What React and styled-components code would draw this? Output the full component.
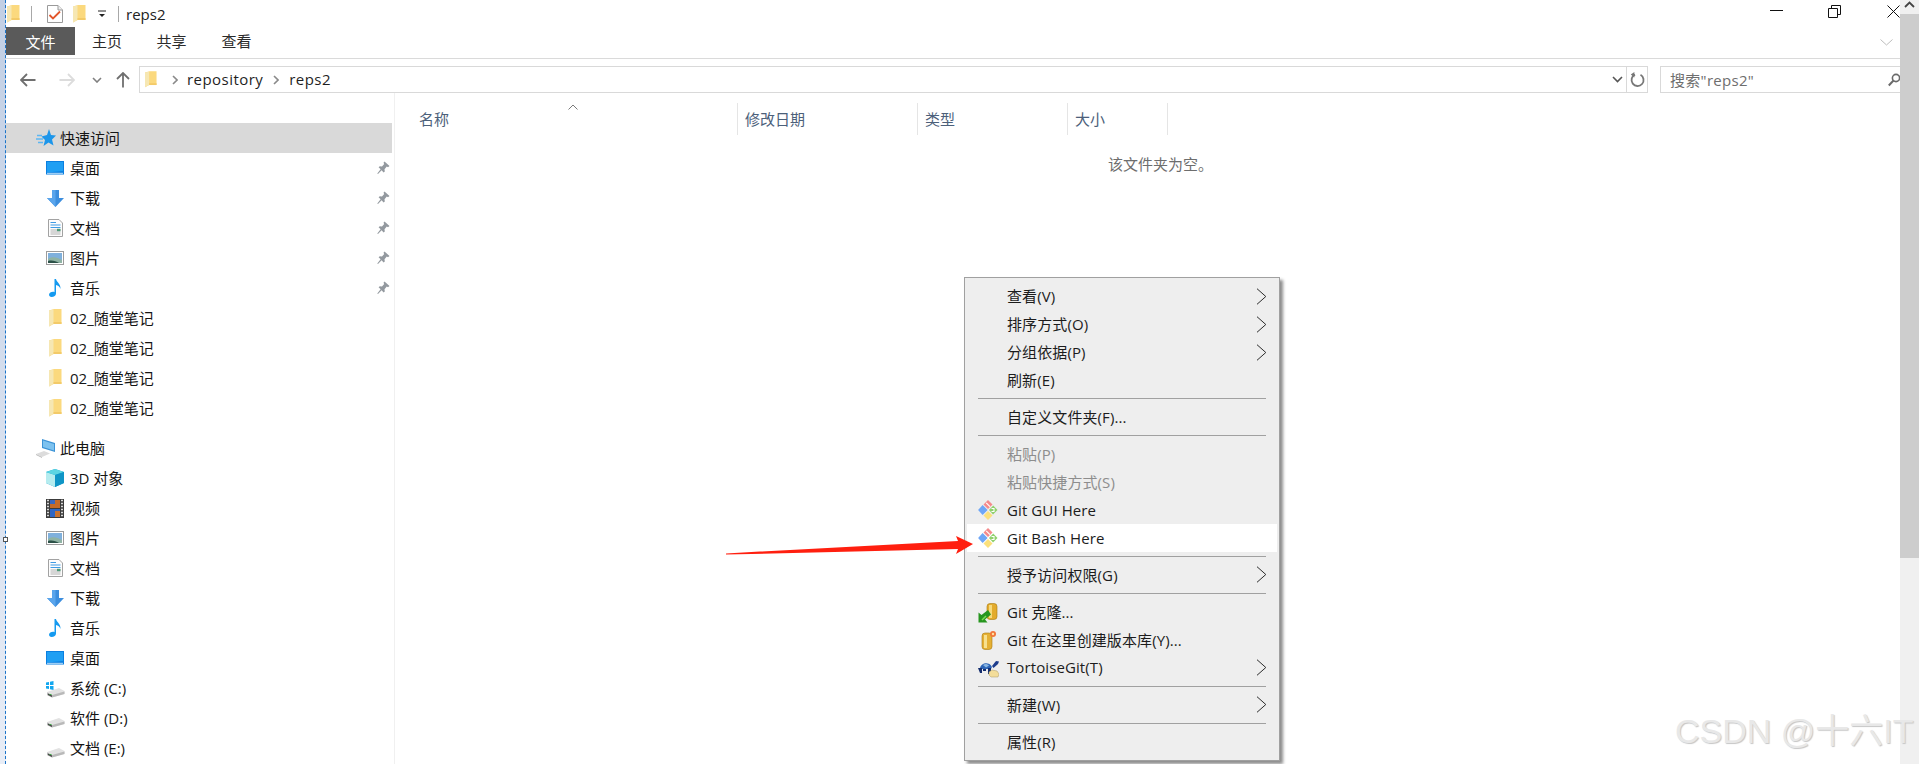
import React from 'react';
import styled, { createGlobalStyle } from 'styled-components';

const Global = createGlobalStyle`
  html, body { margin: 0; padding: 0; background: #fff; }
  body { font-family: "Open Sans", "Noto Sans CJK SC", sans-serif; font-size: 15px; color: #1a1a1a; }
  * { box-sizing: border-box; }
`;

const Page = styled.div`
  position: relative; display: flex; width: 1920px; height: 764px; overflow: hidden; background: #fff;
`;
const Strip = styled.div`
  position: relative; flex: 0 0 6px;
  background: linear-gradient(#c2cfe4, #e8edf6);
  border-right: 1px dashed #1b74c9;
`;
const Handle = styled.div`
  position: absolute; left: 3px; top: 537px; width: 5px; height: 5px; background: #fff; border: 1px solid #555;
`;
const Window = styled.div`
  flex: 1; min-width: 0; display: flex; flex-direction: column;
`;
const TitleBar = styled.div`
  display: flex; align-items: center; height: 27px; padding-left: 1px;
`;
const QuickIcon = styled.span`
  display: flex; align-items: center; justify-content: center; width: ${p => p.$w}px; height: 20px; margin-left: ${p => p.$ml || 0}px;
`;
const TitleSep = styled.span`
  width: 1px; height: 16px; background: #a8a8a8; margin-left: ${p => p.$ml}px;
`;
const TitleText = styled.span`
  margin-left: 7px; font-size: 15px; color: #222; line-height: 20px;
`;
const WinButtons = styled.div`
  margin-left: auto; display: flex; align-items: center; height: 22px; margin-bottom: 5px;
`;
const WinButton = styled.span`
  display: flex; justify-content: ${p => (p.$end ? 'flex-end' : 'center')}; align-items: center; width: ${p => p.$w}px; height: 22px;
`;
const Tabs = styled.div`
  display: flex; height: 32px; border-bottom: 1px solid #dadada; align-items: flex-start;
`;
const Tab = styled.div`
  height: 28px; line-height: ${p => (p.$active ? 30 : 29)}px; font-size: 15px; text-align: center; width: ${p => p.$w}px;
  color: ${p => (p.$active ? '#fff' : '#2b2b2b')};
  background: ${p => (p.$active ? '#5a5a5a' : 'transparent')};
`;
const Collapse = styled.span`
  margin-left: auto; margin-right: 7px; margin-top: 12px; display: flex;
`;
const AddressRow = styled.div`
  display: flex; align-items: center; height: 27px; margin-top: 7px;
`;
const NavArea = styled.div`
  display: flex; align-items: center; width: 133px; height: 27px;
`;
const NavIcon = styled.span`
  display: flex; margin-left: ${p => p.$ml}px;
`;
const AddressBox = styled.div`
  display: flex; align-items: center; width: 1509px; height: 27px; border: 1px solid #d9d9d9; padding-left: 5px; font-size: 15px;
`;
const Crumb = styled.span`
  color: #1f1f1f; margin-left: ${p => p.$ml}px; line-height: 25px; letter-spacing: 0.45px;
`;
const AddressEnd = styled.div`
  margin-left: auto; display: flex; align-items: center; height: 25px;
`;
const Refresh = styled.span`
  display: flex; align-items: center; justify-content: center; width: 21px; height: 25px; margin-left: 3px; border-left: 1px solid #d9d9d9;
`;
const SearchBox = styled.div`
  flex: 1; margin-left: 12px; height: 27px; display: flex; align-items: center; border: 1px solid #d9d9d9; border-right: 0;
  padding-left: 9px; color: #6e6e6e; font-size: 15px; letter-spacing: 0.3px;
`;
const SearchIcon = styled.span`
  margin-left: auto; display: flex;
`;
const Body = styled.div`
  flex: 1; display: flex; min-height: 0;
`;
const Sidebar = styled.nav`
  flex: 0 0 389px; padding: 30px 2px 0 0; border-right: 1px solid #f0f0f0;
`;
const Row = styled.div`
  display: flex; align-items: center; height: 30px;
  padding-left: ${p => (p.$section ? 29 : 38)}px;
  margin-top: ${p => p.$gap || 0}px;
  background: ${p => (p.$selected ? '#d9d9d9' : 'transparent')};
  color: #151515; font-size: 15px;
`;
const RowIcon = styled.span`
  display: flex; justify-content: center; align-items: center; width: 22px; height: 22px; margin-right: ${p => (p.$section ? 3 : 4)}px;
`;
const RowLabel = styled.span`
  line-height: 30px; white-space: pre;
`;
const PinWrap = styled.span`
  margin-left: auto; margin-right: 2px; display: flex;
`;
const Content = styled.main`
  flex: 1; display: flex; flex-direction: column;
`;
const Header = styled.div`
  position: relative; display: flex; height: 32px; margin-top: 10px; color: #4c607a;
`;
const Col = styled.div`
  width: ${p => p.$w}px; padding-left: ${p => p.$pl}px; border-right: 1px solid #e5e5e5; line-height: 32px; font-size: 15px;
`;
const SortCaret = styled.svg`
  position: absolute; left: 173px; top: 1px;
`;
const Empty = styled.div`
  margin: 19px 0 0 713px; color: #6d6d6d; font-size: 15px; line-height: 20px;
`;
const Scrollbar = styled.div`
  flex: 0 0 19px; margin-right: 1px; display: flex; flex-direction: column; background: #f0f0f0;
`;
const ScrollUp = styled.div`
  height: 14px; display: flex; justify-content: center; align-items: flex-start; padding-top: 1px; background: #f0f0f0;
`;
const Thumb = styled.div`
  height: 544px; background: #cdcdcd;
`;
const Menu = styled.div`
  position: absolute; left: 964px; top: 277px; width: 316px; padding: 5px 2px 4px;
  background: #eeeeee; border: 1px solid #a0a0a0;
  box-shadow: 3px 3px 3px rgba(0,0,0,0.45);
  font-size: 15px; color: #1c1c1c; letter-spacing: 0.1px;
`;
const MenuItem = styled.div`
  position: relative; display: flex; align-items: center; height: 27.75px;
  padding: 0 0 ${p => (p.$latin ? 0 : 2)}px 40px;
  background: ${p => (p.$hot ? '#ffffff' : 'transparent')};
  color: ${p => (p.$disabled ? '#8d8d8d' : '#1c1c1c')};
  white-space: pre;
`;
const MenuIcon = styled.span`
  position: absolute; left: 10px; top: 3px; width: 22px; height: 22px; display: flex; align-items: center; justify-content: center;
`;
const MenuArrow = styled.svg`
  position: absolute; right: 10px; top: 5px;
`;
const MenuSep = styled.div`
  height: 1px; margin: 4px 11px 4.5px; background: #a0a0a0;
`;
const ArrowOverlay = styled.svg`
  position: absolute; left: 720px; top: 530px;
`;
const Watermark = styled.div`
  position: absolute; left: 1675px; top: 711px; font-family: "Liberation Sans", "Noto Sans CJK SC", sans-serif;
  font-size: 34px; line-height: 40px; color: #e8e8e8; white-space: pre;
  text-shadow: 1px 1px 1px #c6c6c6;
`;

const FolderI = ({ w = 13, h = 18 }) => (
  <svg width={w} height={h} viewBox="0 0 13 18">
    <path d="M0 1.5 L5 0 H12.5 V15 H4.5 L0 17.5 Z" fill="#fbd97e" />
    <path d="M0 1.5 L4.5 0.5 V15 L0 17.5 Z" fill="#f6e7b3" />
    <path d="M4.5 13 H12.5 V15 H4.5 Z" fill="#f3ca68" />
  </svg>
);
const CheckDoc = () => (
  <svg width="16" height="18" viewBox="0 0 16 18">
    <path d="M.5.5H11L15.5 5V17.5H.5Z" fill="#fff" stroke="#9a9a9a" />
    <path d="M11 .5V5H15.5" fill="#eee" stroke="#9a9a9a" />
    <path d="M2.5 10L6 13.5 13 6.5" fill="none" stroke="#e2562a" strokeWidth="1.8" />
  </svg>
);
const Star = () => (
  <svg width="20" height="18" viewBox="0 0 20 18">
    <path d="M13 0L15 6 20 6.5 16 10.5 17.5 16.5 12.5 13.5 7.5 17 9 11 5.5 7.5 11 6Z" fill="#1d96ea" />
    <path d="M1 6.5H6M0 10H7M2 13.5H7" stroke="#5cb6f2" strokeWidth="1.4" />
  </svg>
);
const Desktop = () => (
  <svg width="18" height="14" viewBox="0 0 18 14">
    <rect width="18" height="13.5" fill="#0b7fe0" />
    <path d="M1 1H17V10L1 11.5Z" fill="#1f9ff3" />
    <rect x="1" y="11.8" width="16" height="1" fill="#bfe2fb" />
  </svg>
);
const Down = () => (
  <svg width="17" height="17" viewBox="0 0 17 17">
    <path d="M5 0H12V8H17L8.5 17 0 8H5Z" fill="#3c8ede" />
    <path d="M5 0H8.5V17L0 8H5Z" fill="#5aa5ec" />
  </svg>
);
const Doc = () => (
  <svg width="15" height="18" viewBox="0 0 15 18">
    <path d="M.5.5H11L14.5 4V17.5H.5Z" fill="#fcfcfc" stroke="#a2a2a2" />
    <path d="M2.5 3.5H8M2.5 6H12.5M2.5 8.5H12.5" stroke="#3d9be4" strokeWidth="1" />
    <path d="M2.5 11H12.5M2.5 13H12.5M2.5 15H12.5" stroke="#b0b0b0" strokeWidth="1" />
    <rect x="9" y="9.8" width="3.5" height="2.4" fill="#4d9a77" />
  </svg>
);
const Pic = () => (
  <svg width="18" height="14" viewBox="0 0 18 14">
    <rect x=".5" y=".5" width="17" height="13" fill="#fff" stroke="#9c9c9c" />
    <rect x="2" y="2" width="14" height="10" fill="#7fb0dc" />
    <path d="M2 8C6 5 11 6 16 9V12H2Z" fill="#8fb3a4" />
    <path d="M2 10C6 9 10 10 13 12H2Z" fill="#2c5148" />
  </svg>
);
const Music = () => (
  <svg width="12" height="18" viewBox="0 0 12 18">
    <path d="M5.5 0H7C7.3 3 11.8 4.5 11.5 10 10.8 7.5 9 6.5 7 6V14.5C7 16.5 5 18 2.6 18 1 18 0 17 0 15.8 0 14 2.2 12.8 4 12.8 4.7 12.8 5.2 12.9 5.5 13.2Z" fill="#149af0" />
  </svg>
);
const Pin = () => (
  <svg width="13" height="14" viewBox="0 0 13 14">
    <path d="M7.5 0.5L12.5 5 11 6.3 9.8 5.6 7.5 8.3 7.8 10.5 6.6 11.4 4.6 9.2 1 13 0.3 12.5 3.6 8.3 1.6 6.3 2.8 5.3 5 5.6 7.2 3 6.5 1.8Z" fill="#93999f" />
  </svg>
);
const PC = () => (
  <svg width="20" height="19" viewBox="0 0 20 19">
    <path d="M6 0L19 4V13L6 9Z" fill="#3c93d6" />
    <path d="M7 1.5L18 5V11.5L7 8Z" fill="#7dc2ef" />
    <path d="M0 15L8 12 14 14.5 6 18Z" fill="#dcdcdc" />
    <path d="M0 15L6 18V19L0 16Z" fill="#bdbdbd" />
  </svg>
);
const Cube = () => (
  <svg width="18" height="18" viewBox="0 0 18 18">
    <path d="M9 0L18 3V14L9 18 0 14V3Z" fill="#15a3cd" />
    <path d="M0 3L9 6V18L0 14Z" fill="#b5ecef" />
    <path d="M9 0L18 3 9 6 0 3Z" fill="#5cd5e3" />
    <path d="M9 6L18 3V14L9 18Z" fill="#0f95c6" />
  </svg>
);
const Film = () => (
  <svg width="18" height="19" viewBox="0 0 18 19">
    <rect width="18" height="19" fill="#3a3a3a" />
    <path d="M1 1.5H3M1 4.5H3M1 7.5H3M1 10.5H3M1 13.5H3M1 16.5H3M15 1.5H17M15 4.5H17M15 7.5H17M15 10.5H17M15 13.5H17M15 16.5H17" stroke="#d8d8d8" strokeWidth="1.4" />
    <rect x="4" y="1" width="10" height="8" fill="#c56a2a" />
    <rect x="4" y="1" width="5" height="4" fill="#3a67c0" />
    <rect x="4" y="10" width="10" height="8" fill="#2f66c4" />
    <rect x="9" y="12" width="5" height="6" fill="#c9732f" />
  </svg>
);
const Drive = ({ win }) => (
  <svg width="20" height="20" viewBox="0 0 20 20">
    <path d="M2 14L14 10 19.5 13V16L7 19.5 2 17Z" fill="#e2e2e2" />
    <path d="M2 14.5L7 17 19.5 13.5 19.5 16 7 19.5 2 17Z" fill="#b9b9b9" />
    <path d="M3 15.5L7 17.5 7 19 3 17Z" fill="#444" />
    <rect x="4.5" y="16" width="2" height="1" fill="#3fae49" />
    {win && <path d="M1 4.5L4 4V7H1ZM5 3.8L8.5 3V7H5ZM1 8H4V11L1 10.5ZM5 8H8.5V12L5 11.2Z" fill="#13a7ef" />}
  </svg>
);
const GitIcon = () => (
  <svg width="20" height="20" viewBox="0 0 20 20">
    <path d="M10 10L5 5 0.5 10 5 15Z" fill="#6ea6f6" transform="translate(-.4 0)" />
    <path d="M5.5 4.5L10 0 14.5 4.5 10 9Z" fill="#f58a8c" />
    <path d="M8.2 2.8L12 6.6" stroke="#fff" strokeWidth="1.2" />
    <path d="M11 10L15.2 5.5 19.5 10 15 14.5Z" fill="#8fd06c" />
    <path d="M13.5 8.5H16V11.5H13.5" fill="none" stroke="#fff" strokeWidth="1.1" />
    <path d="M5.5 15.5L10 11 14.5 15.5 10 20Z" fill="#fbe07c" />
  </svg>
);
const GitClone = () => (
  <svg width="20" height="20" viewBox="0 0 20 20">
    <rect x="9" y="0.5" width="10" height="16" rx="3" fill="#e3ab2c" stroke="#a87a10" strokeWidth=".6" />
    <rect x="11" y="2" width="3" height="13" fill="#f6da7c" />
    <path d="M10 7L3.5 12 0.5 9.5V19.5H9.5L7 16.5 13 11.5Z" fill="#27961f" />
    <path d="M4 17L8 13" stroke="#7fdc55" strokeWidth="1.4" />
  </svg>
);
const GitInit = () => (
  <svg width="20" height="20" viewBox="0 0 20 20">
    <rect x="4" y="3" width="10" height="16.5" rx="3" fill="#e5b034" stroke="#a87a10" strokeWidth=".6" />
    <rect x="6" y="5" width="3" height="13" fill="#f7e08e" />
    <circle cx="15" cy="4" r="3" fill="#f2763a" />
    <circle cx="15" cy="4" r="1.2" fill="#ffe1a0" />
  </svg>
);
const Turtle = () => (
  <svg width="21" height="20" viewBox="0 0 21 20">
    <path d="M2 10C3 5 11 3 14 9L13 11H3Z" fill="#2c64b6" />
    <path d="M5 7C7 5.5 9 5.5 11 7.5L8 9.5Z" fill="#89b6e2" />
    <path d="M0 10L4 10 4 15 2 15ZM10 10H13V16H10ZM5 11H8V13H5Z" fill="#142e6e" />
    <path d="M14 8L18 3 21 3.5 20 6 15.5 10Z" fill="#1d3c8c" />
    <path d="M11 14L14 12 19 13 21 16 20 19H13L11 17Z" fill="#f3dd9a" stroke="#aa9a66" strokeWidth=".5" />
  </svg>
);
const Chev = ({ c = '#8a8a8a', w = 1.6, d = 'M1 1L5 5 1 9', s = [6, 10] }) => (
  <svg width={s[0]} height={s[1]} viewBox={`0 0 ${s[0]} ${s[1]}`}><path d={d} fill="none" stroke={c} strokeWidth={w} /></svg>
);
const Arrow = ({ d, c, s = 16 }) => (
  <svg width={s} height={s} viewBox="0 0 16 16"><path d={d} fill="none" stroke={c} strokeWidth="1.8" /></svg>
);

const quick = [
  ['桌面', Desktop], ['下载', Down], ['文档', Doc], ['图片', Pic], ['音乐', Music],
];
const notes = [1, 2, 3, 4];
const pc = [
  ['3D 对象', Cube], ['视频', Film], ['图片', Pic], ['文档', Doc], ['下载', Down], ['音乐', Music], ['桌面', Desktop],
  ['系统 (C:)', () => <Drive win />], ['软件 (D:)', Drive], ['文档 (E:)', Drive],
];

const MI = ({ icon: I, sub, hot, disabled, latin, children }) => (
  <MenuItem $hot={hot} $disabled={disabled} $latin={latin}>
    {I && <MenuIcon><I /></MenuIcon>}
    {children}
    {sub && (
      <MenuArrow width="11" height="17" viewBox="0 0 11 17">
        <path d="M1 .7L9.8 8.5 1 16.3" fill="none" stroke="#2c2c2c" strokeWidth="1" />
      </MenuArrow>
    )}
  </MenuItem>
);

export default function App() {
  return (
    <Page>
      <Global />
      <Strip><Handle /></Strip>
      <Window>
        <TitleBar>
          <QuickIcon $w={13}><FolderI /></QuickIcon>
          <TitleSep $ml={11} />
          <QuickIcon $w={16} $ml={15}><CheckDoc /></QuickIcon>
          <QuickIcon $w={13} $ml={10}><FolderI /></QuickIcon>
          <QuickIcon $w={8} $ml={12}>
            <svg width="8" height="8" viewBox="0 0 8 8"><path d="M0 1H8" stroke="#222" /><path d="M1 4H7L4 7Z" fill="#222" /></svg>
          </QuickIcon>
          <TitleSep $ml={12} />
          <TitleText>reps2</TitleText>
          <WinButtons>
            <WinButton $w={58}><svg width="13" height="2" viewBox="0 0 13 2"><rect width="13" height="1" fill="#111" /></svg></WinButton>
            <WinButton $w={58}><svg width="13" height="13" viewBox="0 0 13 13"><path d="M.5 3.5H9.5V12.5H.5ZM3.5 3.5V.5H12.5V9.5H9.5" fill="none" stroke="#111" /></svg></WinButton>
            <WinButton $w={37} $end><svg width="13" height="13" viewBox="0 0 13 13"><path d="M.5.5L12.5 12.5M12.5.5L.5 12.5" stroke="#111" /></svg></WinButton>
          </WinButtons>
        </TitleBar>
        <Tabs>
          <Tab $active $w={69}>文件</Tab>
          <Tab $w={64}>主页</Tab>
          <Tab $w={65}>共享</Tab>
          <Tab $w={65}>查看</Tab>
          <Collapse><Chev c="#bdbdbd" w={1} d="M.5.5L6.5 6 12.5.5" s={[13, 7]} /></Collapse>
        </Tabs>
        <AddressRow>
          <NavArea>
            <NavIcon $ml={14}><Arrow d="M15.5 8H1M7 2L1 8 7 14" c="#6f6f6f" /></NavIcon>
            <NavIcon $ml={23}><Arrow d="M.5 8H15M9 2L15 8 9 14" c="#dcdcdc" /></NavIcon>
            <NavIcon $ml={17}><Chev c="#808080" d="M1 1L5 5 9 1" s={[10, 6]} /></NavIcon>
            <NavIcon $ml={13}><Arrow d="M8 15.5V1M2 7L8 1 14 7" c="#6f6f6f" /></NavIcon>
          </NavArea>
          <AddressBox>
            <FolderI w={12} h={17} />
            <NavIcon $ml={15}><Chev /></NavIcon>
            <Crumb $ml={9}>repository</Crumb>
            <NavIcon $ml={10}><Chev /></NavIcon>
            <Crumb $ml={10}>reps2</Crumb>
            <AddressEnd>
              <Chev c="#555" d="M1 1L5.5 5.5 10 1" s={[11, 7]} />
              <Refresh>
                <svg width="15" height="16" viewBox="0 0 15 16">
                  <path d="M5 2.6A6 6 0 1 0 10.5 2.8" fill="none" stroke="#777" strokeWidth="1.8" />
                  <path d="M4.4 0V5.4L.8 2.6Z" fill="#777" />
                </svg>
              </Refresh>
            </AddressEnd>
          </AddressBox>
          <SearchBox>
            搜索"reps2"
            <SearchIcon>
              <svg width="12" height="14" viewBox="0 0 12 14">
                <circle cx="8" cy="5" r="3.6" fill="none" stroke="#6a6a6a" strokeWidth="1.6" />
                <path d="M5.5 7.5L0.8 12.5" stroke="#6a6a6a" strokeWidth="2" />
              </svg>
            </SearchIcon>
          </SearchBox>
        </AddressRow>
        <Body>
          <Sidebar>
            <Row $section $selected><RowIcon $section><Star /></RowIcon><RowLabel>快速访问</RowLabel></Row>
            {quick.map(([t, I]) => (
              <Row key={t}><RowIcon><I /></RowIcon><RowLabel>{t}</RowLabel><PinWrap><Pin /></PinWrap></Row>
            ))}
            {notes.map(n => (
              <Row key={n}><RowIcon><FolderI /></RowIcon><RowLabel>02_随堂笔记</RowLabel></Row>
            ))}
            <Row $section $gap={10}><RowIcon $section><PC /></RowIcon><RowLabel>此电脑</RowLabel></Row>
            {pc.map(([t, I]) => (
              <Row key={t}><RowIcon><I /></RowIcon><RowLabel>{t}</RowLabel></Row>
            ))}
          </Sidebar>
          <Content>
            <Header>
              <Col $w={343} $pl={24}>名称</Col>
              <Col $w={180} $pl={7}>修改日期</Col>
              <Col $w={150} $pl={7}>类型</Col>
              <Col $w={100} $pl={7}>大小</Col>
              <SortCaret width="10" height="6" viewBox="0 0 10 6"><path d="M.5 5.5L5 1 9.5 5.5" fill="none" stroke="#7a7a7a" /></SortCaret>
            </Header>
            <Empty>该文件夹为空。</Empty>
          </Content>
        </Body>
      </Window>
      <Scrollbar>
        <ScrollUp><Chev c="#444" w={1.8} d="M1 6L5.5 1.5 10 6" s={[11, 7]} /></ScrollUp>
        <Thumb />
      </Scrollbar>

      <Menu>
        <MI sub>查看(V)</MI>
        <MI sub>排序方式(O)</MI>
        <MI sub>分组依据(P)</MI>
        <MI>刷新(E)</MI>
        <MenuSep />
        <MI>自定义文件夹(F)...</MI>
        <MenuSep />
        <MI disabled>粘贴(P)</MI>
        <MI disabled>粘贴快捷方式(S)</MI>
        <MI icon={GitIcon} latin>Git GUI Here</MI>
        <MI icon={GitIcon} latin hot>Git Bash Here</MI>
        <MenuSep />
        <MI sub>授予访问权限(G)</MI>
        <MenuSep />
        <MI icon={GitClone}>Git 克隆...</MI>
        <MI icon={GitInit}>Git 在这里创建版本库(Y)...</MI>
        <MI icon={Turtle} sub>TortoiseGit(T)</MI>
        <MenuSep />
        <MI sub>新建(W)</MI>
        <MenuSep />
        <MI>属性(R)</MI>
      </Menu>

      <ArrowOverlay width="260" height="30" viewBox="0 0 260 30">
        <path d="M6 23.4L238 11 236 6 253 14 236 24 238 19 6 24.6Z" fill="#ff1f0f" />
      </ArrowOverlay>
      <Watermark>CSDN @十六IT</Watermark>
    </Page>
  );
}
